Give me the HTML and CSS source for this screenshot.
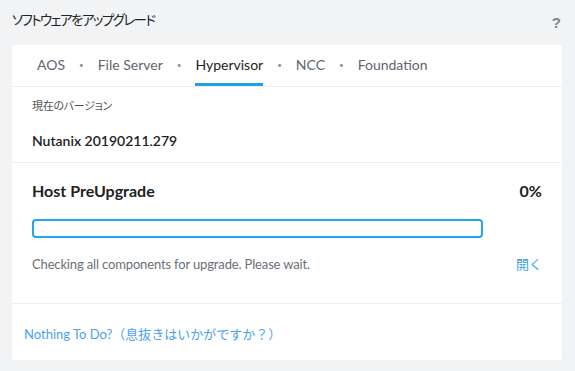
FILE: index.html
```html
<!DOCTYPE html>
<html lang="ja">
<head>
    <meta charset="UTF-8">
    <meta name="viewport" content="width=device-width, initial-scale=1.0">
    <title>ソフトウェアをアップグレード</title>
    <link rel="stylesheet" href="styles.css">
</head>
<body>

<div class="page-header">
    <h2>ソフトウェアをアップグレード</h2>
    <span class="help">?</span>
</div>

<div class="card">
    <div class="tabs">
        <span class="tab">AOS</span>
        <span class="sep">•</span>
        <span class="tab">File Server</span>
        <span class="sep">•</span>
        <span class="tab active">Hypervisor</span>
        <span class="sep">•</span>
        <span class="tab">NCC</span>
        <span class="sep">•</span>
        <span class="tab">Foundation</span>
    </div>

    <div class="version">
        <p class="label">現在のバージョン</p>
        <p class="value">Nutanix 20190211.279</p>
    </div>

    <div class="progress-section">
        <div class="progress-head">
            <span class="step">Host PreUpgrade</span>
            <span class="percent">0%</span>
        </div>
        <div class="progress-row">
            <div class="progress-bar"><div class="progress-fill" style="width: 0%"></div></div>
        </div>
        <div class="status-row">
            <span class="status">Checking all components for upgrade. Please wait.</span>
            <a class="open-link" href="#">開く</a>
        </div>
    </div>

    <div class="card-footer">
        <a class="idle-link" href="#">Nothing To Do?（息抜きはいかがですか？）</a>
    </div>
</div>

</body>
</html>
```

FILE: styles.css
```css
* {
    box-sizing: border-box;
    margin: 0;
    padding: 0;
}

body {
    background: #f2f3f5;
    font-family: Lato, "Noto Sans CJK JP", sans-serif;
    color: #222;
    padding: 0 13px 0 12px;
}

.page-header {
    height: 45px;
    display: flex;
    justify-content: space-between;
    align-items: flex-start;
}

.page-header h2 {
    font-family: "Noto Sans CJK JP", sans-serif;
    font-feature-settings: "palt";
    font-weight: 400;
    font-size: 13.5px;
    letter-spacing: -1.6px;
    line-height: 20px;
    margin-top: 9px;
    color: #222;
}

.help {
    font-family: "Liberation Sans", sans-serif;
    font-size: 15px;
    font-weight: 700;
    color: #7d838b;
    margin-top: 14px;
    margin-right: 1px;
}

.card {
    background: #fff;
    border-radius: 3px;
    height: 315px;
    display: flex;
    flex-direction: column;
}

.tabs {
    display: flex;
    align-items: stretch;
    height: 42px;
    padding-left: 25px;
    border-bottom: 1px solid #eef0f2;
}

.tab {
    display: flex;
    align-items: center;
    font-size: 14px;
    color: #5d6670;
    padding-top: 1px;
    border-bottom: 3px solid transparent;
}

.tab.active {
    color: #222;
    border-bottom-color: #1fa0ef;
}

.sep {
    display: flex;
    align-items: center;
    font-size: 8px;
    color: #8a9099;
    padding: 0 14px 2px;
}

.version {
    padding: 10px 20px 0;
    height: 76px;
    border-bottom: 1px solid #eef0f2;
}

.label {
    font-family: "Noto Sans CJK JP", sans-serif;
    font-feature-settings: "palt";
    font-size: 11px;
    letter-spacing: -0.3px;
    color: #555;
    line-height: 16px;
}

.value {
    font-size: 14px;
    font-weight: 600;
    color: #222;
    margin-top: 18px;
    line-height: 20px;
}

.progress-section {
    padding: 17px 20px 0;
    height: 141px;
    border-bottom: 1px solid #eef0f2;
}

.progress-head {
    display: flex;
    justify-content: space-between;
    font-size: 16px;
    font-weight: 700;
    line-height: 22px;
    color: #222;
}

.progress-row {
    margin-top: 17px;
}

.progress-bar {
    width: 451px;
    height: 19px;
    border: 2px solid #24a4ee;
    border-radius: 4px;
    overflow: hidden;
}

.progress-fill {
    height: 100%;
    background: #24a4ee;
}

.status-row {
    display: flex;
    justify-content: space-between;
    margin-top: 17px;
    font-size: 13px;
    line-height: 18px;
}

.status {
    color: #6b7078;
    letter-spacing: -0.15px;
}

.open-link {
    font-family: "Noto Sans CJK JP", sans-serif;
    color: #3aa0e6;
    text-decoration: none;
}

.card-footer {
    padding: 19px 12px 0;
}

.idle-link {
    font-size: 13px;
    line-height: 18px;
    color: #4d9ff0;
    text-decoration: none;
}
```
